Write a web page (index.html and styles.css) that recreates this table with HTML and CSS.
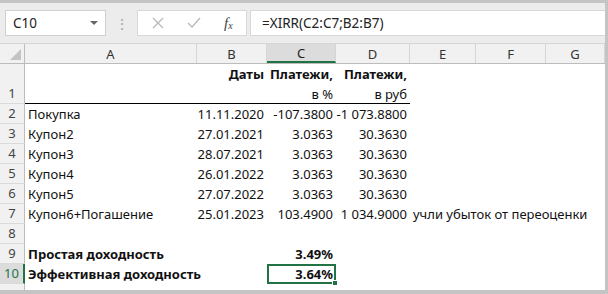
FILE: index.html
```html
<!DOCTYPE html>
<html>
<head>
<meta charset="utf-8">
<link rel="stylesheet" href="styles.css">
</head>
<body>
<div class="frame">
  <div class="toolbar">
    <div class="namebox"><span>C10</span><span class="arrow"></span></div>
    <div class="grip">⋮</div>
    <div class="fxbox">
      <svg class="ico x" width="12" height="12" viewBox="0 0 12 12"><path d="M1 1L11 11M11 1L1 11" stroke="#b9b9b9" stroke-width="1.3" fill="none"/></svg>
      <svg class="ico chk" width="14" height="12" viewBox="0 0 14 12"><path d="M1 6L5 10L13 1" stroke="#b9b9b9" stroke-width="1.3" fill="none"/></svg>
      <span class="fx"><i>f</i><sub>x</sub></span>
    </div>
    <div class="formula">=XIRR(C2:C7;B2:B7)</div>
  </div>
  <div class="sheet">
    <div class="row hdr">
      <div class="rh corner"><span class="tri"></span></div>
      <div class="ch a">A</div><div class="ch b">B</div><div class="ch c sel">C</div><div class="ch d">D</div><div class="ch e">E</div><div class="ch f">F</div><div class="ch g">G</div>
    </div>
    <div class="row r1">
      <div class="rh">1</div>
      <div class="cell a bb"></div>
      <div class="cell b bb bold top">Даты</div>
      <div class="cell c bb two"><b>Платежи,</b><span>в %</span></div>
      <div class="cell d bb two"><b>Платежи,</b><span>в руб</span></div>
      <div class="cell e"></div><div class="cell f"></div><div class="cell g"></div>
    </div>
    <div class="row"><div class="rh">2</div><div class="cell a l">Покупка</div><div class="cell b">11.11.2020</div><div class="cell c">-107.3800</div><div class="cell d">-1 073.8800</div><div class="cell e"></div><div class="cell f"></div><div class="cell g"></div></div>
    <div class="row"><div class="rh">3</div><div class="cell a l">Купон2</div><div class="cell b">27.01.2021</div><div class="cell c">3.0363</div><div class="cell d">30.3630</div><div class="cell e"></div><div class="cell f"></div><div class="cell g"></div></div>
    <div class="row"><div class="rh">4</div><div class="cell a l">Купон3</div><div class="cell b">28.07.2021</div><div class="cell c">3.0363</div><div class="cell d">30.3630</div><div class="cell e"></div><div class="cell f"></div><div class="cell g"></div></div>
    <div class="row"><div class="rh">5</div><div class="cell a l">Купон4</div><div class="cell b">26.01.2022</div><div class="cell c">3.0363</div><div class="cell d">30.3630</div><div class="cell e"></div><div class="cell f"></div><div class="cell g"></div></div>
    <div class="row"><div class="rh">6</div><div class="cell a l">Купон5</div><div class="cell b">27.07.2022</div><div class="cell c">3.0363</div><div class="cell d">30.3630</div><div class="cell e"></div><div class="cell f"></div><div class="cell g"></div></div>
    <div class="row"><div class="rh">7</div><div class="cell a l">Купон6+Погашение</div><div class="cell b">25.01.2023</div><div class="cell c">103.4900</div><div class="cell d">1 034.9000</div><div class="cell e l over">учли убыток от переоценки</div><div class="cell f"></div><div class="cell g"></div></div>
    <div class="row"><div class="rh">8</div><div class="cell a"></div><div class="cell b"></div><div class="cell c"></div><div class="cell d"></div><div class="cell e"></div><div class="cell f"></div><div class="cell g"></div></div>
    <div class="row"><div class="rh">9</div><div class="cell a l bold over">Простая доходность</div><div class="cell b"></div><div class="cell c bold">3.49%</div><div class="cell d"></div><div class="cell e"></div><div class="cell f"></div><div class="cell g"></div></div>
    <div class="row"><div class="rh selr">10</div><div class="cell a l bold over">Эффективная доходность</div><div class="cell b"></div><div class="cell c bold active">3.64%<span class="handle"></span></div><div class="cell d"></div><div class="cell e"></div><div class="cell f"></div><div class="cell g"></div></div>
    <div class="row r11"><div class="rh"></div><div class="cell a"></div></div>
  </div>
</div>
</body>
</html>
```
FILE: styles.css
```css
* { box-sizing: border-box; }
html, body { margin: 0; padding: 0; background: #fff; }
body { font-family: "Noto Sans", "Open Sans", sans-serif; font-size: 13px; color: #111; }
.frame {
  width: 608px; height: 294px; overflow: hidden;
  border-top: 3px solid #c4c4c4; border-right: 3px solid #c4c4c4; border-bottom: 4px solid #c4c4c4;
  background: #fff;
}
.toolbar {
  height: 41px; background: #ececec; display: flex; align-items: center;
  padding: 0 0 0 5px; border-bottom: 1px solid #d6d6d6;
}
.namebox {
  width: 101px; height: 26px; background: #fff; border: 1px solid #cfcfcf;
  display: flex; align-items: center; justify-content: space-between; padding: 0 7px 0 7px;
  font-size: 13.5px; color: #222;
}
.arrow { width: 0; height: 0; border-left: 4px solid transparent; border-right: 4px solid transparent; border-top: 4px solid #666; }
.grip { width: 31px; text-align: center; color: #a8a8a8; font-size: 14px; }
.fxbox {
  width: 110px; height: 26px; background: #fff; border: 1px solid #d8d8d8;
  display: flex; align-items: center; padding-left: 14px; gap: 0;
}
.ico.x { margin-right: 23px; }
.ico.chk { margin-right: 23px; }
.fx { font-family: "Liberation Serif", serif; font-size: 15px; color: #444; }
.fx sub { font-size: 10px; font-style: italic; vertical-align: -1px; }
.formula {
  flex: 1; height: 26px; margin-left: 3px; background: #fff; border: 1px solid #d8d8d8; border-right: none;
  display: flex; align-items: center; padding-left: 11px; font-size: 13.5px; color: #222;
}
.sheet { display: flex; flex-direction: column; }
.row { display: flex; height: 20px; }
.rh {
  width: 25px; flex: none; background: #f1f1f1; color: #444; border-bottom: 1px solid #dadada;
  border-right: 1px solid #bcbcbc; display: flex; align-items: flex-end; justify-content: center;
  padding-bottom: 1px; line-height: 18px;
}
.hdr { height: 20px; background: #f1f1f1; border-bottom: 1px solid #bcbcbc; }
.hdr .rh { border-bottom: none; position: relative; }
.tri { position: absolute; right: 3px; bottom: 3px; width: 0; height: 0;
  border-left: 11px solid transparent; border-bottom: 11px solid #c3c3c3; }
.ch { display: flex; align-items: center; justify-content: center; color: #333; border-right: 1px solid #d6d6d6; background: #f1f1f1; }
.ch.sel { background: #dcdcdc; border-bottom: 2px solid #217346; color: #222; }
.a { width: 172px; flex: none; }
.b { width: 70px; flex: none; }
.c { width: 69px; flex: none; }
.d { width: 74px; flex: none; }
.e { width: 66px; flex: none; }
.f { width: 70px; flex: none; }
.g { width: 59px; flex: none; }
.cell { display: flex; align-items: center; justify-content: flex-end; padding: 0 3px; white-space: nowrap; line-height: 18px; }
.cell.l { justify-content: flex-start; }
.cell.over { overflow: visible; }
.bold { font-weight: 700; }
.r1 { height: 40px; }
.r1 .rh { border-bottom-color: #dadada; }
.bb { border-bottom: 1px solid #000; }
.top { align-items: flex-start; padding-top: 1px; }
.two { flex-direction: column; align-items: flex-end; justify-content: flex-start; padding-top: 1px; }
.two span { margin-top: 2px; }
.active { border: 2px solid #217346; position: relative; padding-right: 1px; }
.handle { position: absolute; right: -4px; bottom: -4px; width: 6px; height: 6px; background: #217346; border: 1px solid #fff; }
.selr { background: #dcdcdc; color: #217346; border-right: 2px solid #217346; }
.r11 { height: 20px; }
```
